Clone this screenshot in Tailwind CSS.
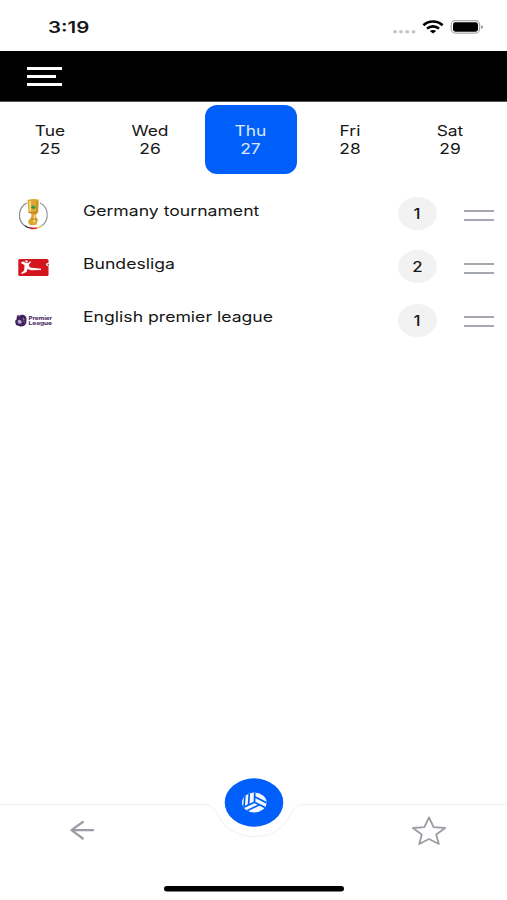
<!DOCTYPE html>
<html lang="en">
<head>
<meta charset="utf-8">
<title>Matches</title>
<script src="https://cdn.jsdelivr.net/npm/@tailwindcss/browser@4"></script>
</head>
<body class="bg-white">
<div class="w-[507px] h-[900px] flex flex-col overflow-hidden bg-white font-['Inter',sans-serif] text-[#161616]">
  <!-- Status bar -->
  <div class="h-[51px] shrink-0 flex items-start justify-between pl-[48px] pr-[22px]">
    <span class="mt-[17px] text-[16px] leading-[20px] font-semibold origin-left scale-x-[1.28]">3:19</span>
    <svg class="mt-[16px] w-[94px] h-[22px]" viewBox="391 16 94 22">
      <g fill="#c4c4c4"><ellipse cx="395" cy="31.7" rx="2" ry="1.7"/><ellipse cx="401" cy="31.7" rx="2" ry="1.7"/><ellipse cx="407.3" cy="31.7" rx="2" ry="1.7"/><ellipse cx="413.5" cy="31.7" rx="2" ry="1.7"/></g>
      <g fill="none" stroke="#000" stroke-width="2.6"><path d="M423.4 25.2C428.8 20.2 437.2 20.2 442.6 25.2"/><path d="M427 28.6C430.4 25.6 435.6 25.6 439 28.6"/></g>
      <path d="M429.8 31Q433 28.9 436.2 31L433 33.6Z"/>
      <rect x="451.2" y="20.7" width="28.4" height="12.4" rx="4" fill="#fff" stroke="#ababab" stroke-width="1.2"/>
      <rect x="453" y="22.3" width="25" height="9.4" rx="2.4"/>
      <path d="M481 25.2Q483.2 25.8 483.2 27Q483.2 28.3 481 28.9Z" fill="#999"/>
    </svg>
  </div>
  <!-- Header -->
  <div class="h-[51px] shrink-0 bg-black border-b border-[#555] flex items-start pl-[27px] pt-[16px]">
    <div class="flex flex-col gap-[5px]">
      <div class="h-[3px] w-[35px] bg-white"></div>
      <div class="h-[3px] w-[29px] bg-white"></div>
      <div class="h-[3px] w-[35px] bg-white"></div>
    </div>
  </div>
  <!-- Days -->
  <div class="h-[85px] shrink-0 flex pt-[3.4px] text-center text-[14.5px] leading-[18px]">
    <div class="w-[100px] shrink-0 pt-[17px]"><div class="scale-x-[1.2]">Tue<br>25</div></div>
    <div class="w-[100px] shrink-0 pt-[17px]"><div class="scale-x-[1.2]">Wed<br>26</div></div>
    <div class="w-[92px] ml-[5px] mr-[3px] h-[69px] shrink-0 pt-[17px] rounded-[12px] bg-[#005ffb] text-[#dce9ff]"><div class="-ml-[1px] scale-x-[1.2]">Thu<br>27</div></div>
    <div class="w-[100px] shrink-0 pt-[17px]"><div class="scale-x-[1.2]">Fri<br>28</div></div>
    <div class="w-[100px] shrink-0 pt-[17px]"><div class="scale-x-[1.2]">Sat<br>29</div></div>
  </div>
  <!-- Leagues -->
  <div class="flex-1 flex flex-col text-[14.5px]">
    <div class="h-[53.3px] flex items-center">
      <svg class="w-[83px] h-[40px] shrink-0" viewBox="0 194 83 40">
        <g fill="none" stroke-width="1.2"><path d="M27 203C18 207 17 220 24.5 225.5" stroke="#8b8b8b"/><path d="M40 203C49 207 49.500 220 42 225.500" stroke="#999"/><path d="M24.500 225.500Q27 227.500 30 228" stroke="#333"/><path d="M30 228Q34 228.800 37 228" stroke="#d22b3e" stroke-width="1.800"/><path d="M37 228Q40 227.300 42 225.500" stroke="#e5b52d"/></g>
        <path d="M27.500 200Q33 198.500 38.800 199.500L38.300 212.500L36 214.500L36.500 218L38 219.500L36.500 224.500Q32.500 226 29 224.500L28 221L31 218L31.500 214L28.500 212Z" fill="#dba632"/>
        <path d="M29 201L31 201L31 212L29.500 211ZM34 215L35.500 215L35 222L33 223Z" fill="#f7dc82"/>
        <path d="M37 201V212" stroke="#b98022"/><path d="M28.500 212.500L37 213M30 219H37" stroke="#a96e15" stroke-width=".8"/>
        <ellipse cx="33.300" cy="207.300" rx="2" ry="1.800" fill="#2b9b52"/>
      </svg>
      <div class="flex-1 -mt-[6px]"><span class="inline-block origin-left scale-x-[1.215] whitespace-nowrap">Germany tournament</span></div>
      <div class="w-[39px] h-[33px] rounded-[50%] bg-[#f2f2f2] flex items-center justify-center text-[14px] font-medium"><span class="-ml-[1px] scale-x-[1.2]">1</span></div>
      <div class="ml-[27px] mr-[13px] mt-[3px] w-[30px] h-[11px] border-y-2 border-[#a4a8b1]"></div>
    </div>
    <div class="h-[53.3px] flex items-center">
      <svg class="w-[83px] h-[40px] shrink-0" viewBox="0 247 83 40">
        <rect x="18.300" y="259" width="30.200" height="17" rx="1.500" fill="#d3151d"/>
        <path d="M21 262L24 261.500L25.500 263H28L30.500 261.200L31 262L28.700 265L30 267.500L41 268.800V270L31 270.300L27.500 269L26.500 272L22 274L21 273L24.200 270.500L24.500 265L21.500 263.500Z" fill="#fff"/><ellipse cx="26.500" cy="261.400" rx="1.300" ry="1.100" fill="#fff"/>
        <ellipse cx="48" cy="264.500" rx="1.900" ry="1.700" fill="#fff"/><circle cx="48.300" cy="264.700" r=".9" fill="#666"/>
      </svg>
      <div class="flex-1 -mt-[6px]"><span class="inline-block origin-left scale-x-[1.215] whitespace-nowrap">Bundesliga</span></div>
      <div class="w-[39px] h-[33px] rounded-[50%] bg-[#f2f2f2] flex items-center justify-center text-[14px] font-medium"><span class="-ml-[1px] scale-x-[1.2]">2</span></div>
      <div class="ml-[27px] mr-[13px] mt-[3px] w-[30px] h-[11px] border-y-2 border-[#a4a8b1]"></div>
    </div>
    <div class="h-[53.3px] flex items-center">
      <svg class="w-[83px] h-[40px] shrink-0" viewBox="0 300.500 83 40">
        <path d="M17 316L19 315.500L18.500 317.500Q20 314.500 23 315.300Q26 315.800 26.500 319L26.300 323.500Q25 327 20.500 327L16 325.500L15 321.500L16.500 320Z" fill="#412060"/>
        <path d="M17.500 321.500Q19.500 319.500 21 321L22 323L20 324.500L18 323.500ZM22.500 318L24.500 319.500L23.500 322L25 323.500" fill="#b7a7c9"/>
        <g fill="#45245f" font-family="Inter, sans-serif" font-weight="700" font-size="5.200"><text x="28.500" y="320" textLength="23.500" lengthAdjust="spacingAndGlyphs">Premier</text><text x="28.500" y="325.500" textLength="23.500" lengthAdjust="spacingAndGlyphs">League</text></g>
      </svg>
      <div class="flex-1 -mt-[6px]"><span class="inline-block origin-left scale-x-[1.215] whitespace-nowrap">English premier league</span></div>
      <div class="w-[39px] h-[33px] rounded-[50%] bg-[#f2f2f2] flex items-center justify-center text-[14px] font-medium"><span class="-ml-[1px] scale-x-[1.2]">1</span></div>
      <div class="ml-[27px] mr-[13px] mt-[2px] w-[30px] h-[11px] border-y-2 border-[#a4a8b1]"></div>
    </div>
  </div>
  <!-- Bottom navigation -->
  <svg class="w-[507px] h-[130px] shrink-0" viewBox="0 770 507 130">
    <path d="M0 804.500H202C212 804.500 215 809 218 815C224 829 238 836.500 254.500 836.500C271 836.500 284 829 290 815C293 809 296 804.500 306 804.500H507" fill="none" stroke="#f0f0f0"/>
    <ellipse cx="254" cy="802.500" rx="29.300" ry="24.200" fill="#005ffb"/>
    <clipPath id="ball"><ellipse cx="254.300" cy="802.500" rx="12.300" ry="10"/></clipPath>
    <g clip-path="url(#ball)">
      <rect x="241" y="791" width="27" height="23" fill="#f3f8ff"/>
      <g fill="none" stroke="#005ffb" stroke-width="1.700">
        <path d="M254.800 791L254.500 802.200L241 808.500M254.500 802.200L268 809"/>
        <path d="M249.400 791L248.600 805"/>
        <path d="M245.200 791L244 807"/>
        <path d="M254.600 796.800L268 803.500"/>
        <path d="M259.500 804.700L245 811.800"/>
      </g>
    </g>
    <path d="M93 830.200H71.500M82.800 822L71.500 830.200L82.800 838.500" fill="none" stroke="#999da3" stroke-width="2.200" stroke-linecap="round" stroke-linejoin="round"/>
    <path d="M429 817.500L433.600 827.200L445.200 828L436.200 834.500L438.800 844L429 839L419.200 844L421.800 834.500L412.800 828L424.400 827.200Z" fill="none" stroke="#9a9da4" stroke-width="1.800" stroke-linejoin="round"/>
    <rect x="164" y="886" width="180" height="5.500" rx="2.750"/>
  </svg>
</div>
</body>
</html>
